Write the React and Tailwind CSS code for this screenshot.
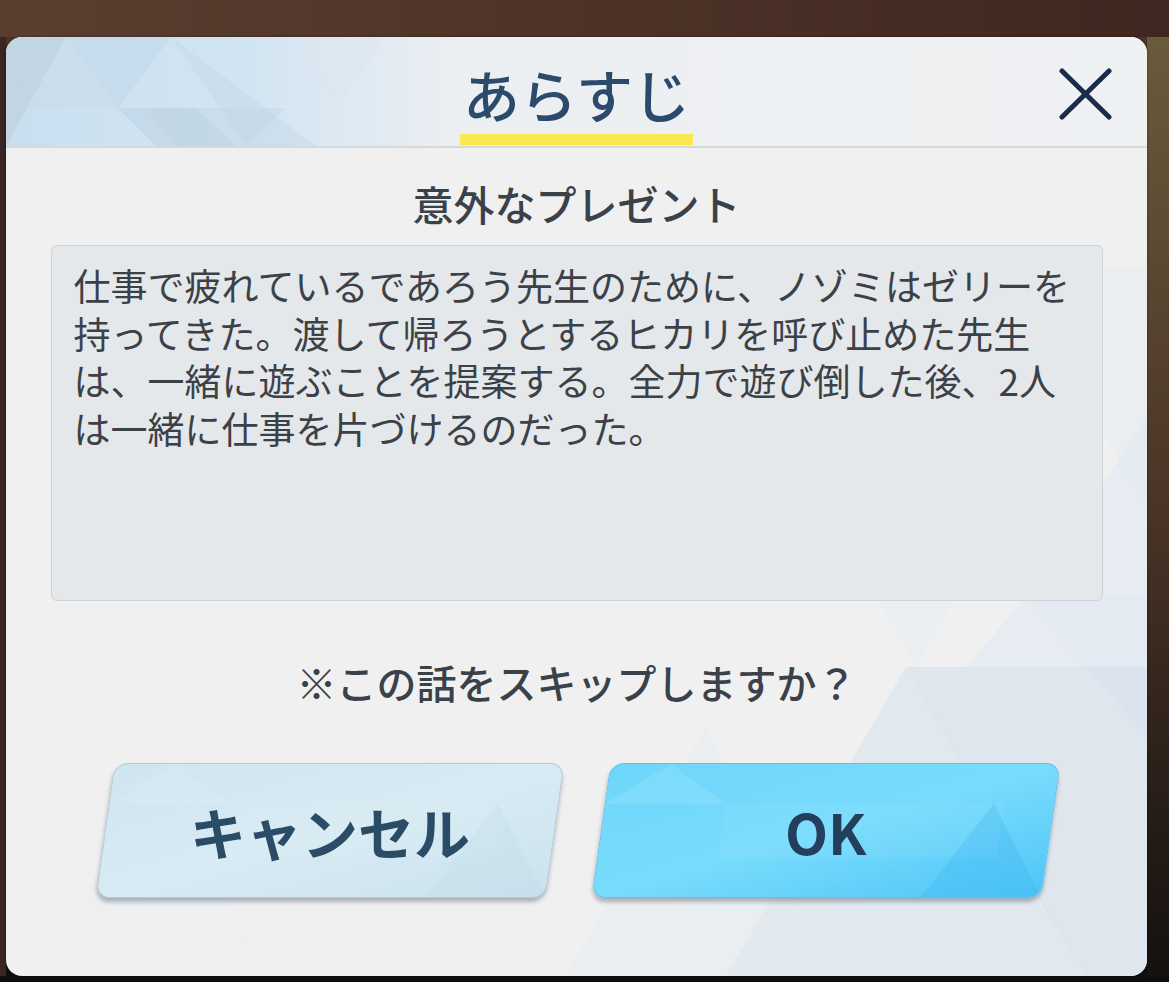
const jp = { fontFamily: '"Noto Sans CJK JP", "Noto Sans", sans-serif' };

function HeaderPattern() {
  return (
    <svg className="absolute inset-0 h-full w-full" viewBox="0 0 1141 110" preserveAspectRatio="none">
      <defs>
        <linearGradient id="hdrFade" x1="0" y1="0" x2="1" y2="0">
          <stop offset="0" stopColor="#c9dff0" />
          <stop offset="0.22" stopColor="#d3e5f2" />
          <stop offset="0.4" stopColor="#eceff2" />
          <stop offset="1" stopColor="#eff1f3" />
        </linearGradient>
      </defs>
      <rect width="1141" height="110" fill="url(#hdrFade)" />
      <polygon points="0,0 60,0 0,110" fill="#b9ccd9" opacity="0.55" />
      <polygon points="60,0 165,0 112,72" fill="#c2d8ea" opacity="0.6" />
      <polygon points="0,72 112,72 60,0" fill="#c8d9e6" opacity="0.35" />
      <polygon points="112,72 150,110 230,110 190,72" fill="#b9cfe1" opacity="0.45" />
      <polygon points="165,0 240,110 310,110" fill="#c4d6e4" opacity="0.45" />
      <polygon points="140,72 280,72 240,110 170,110" fill="#bcd0e0" opacity="0.35" />
      <polygon points="290,0 380,0 330,72" fill="#dde6ee" opacity="0.5" />
    </svg>
  );
}

function BodyPattern() {
  return (
    <svg className="absolute inset-0 h-full w-full" viewBox="0 0 1141 939" preserveAspectRatio="none">
      <polygon points="1141,560 1141,700 1020,560" fill="#dbe6f0" opacity="0.5" />
      <polygon points="720,939 900,630 1080,939" fill="#d7e4ef" opacity="0.6" />
      <polygon points="900,630 1141,630 1141,939 1080,939 1020,840" fill="#d3e0ec" opacity="0.6" />
      <polygon points="1020,560 1141,380 1141,630 960,630" fill="#e0eaf2" opacity="0.55" />
      <polygon points="560,939 700,690 820,939" fill="#e3ebf2" opacity="0.5" />
      <polygon points="820,470 1000,470 910,630" fill="#e6edf3" opacity="0.45" />
      <polygon points="30,939 160,720 260,939" fill="#e8eef3" opacity="0.4" />
      <polygon points="1000,230 1141,230 1141,470" fill="#e3ebf2" opacity="0.45" />
    </svg>
  );
}

function SlantButton({ label, primary }) {
  return (
    <button
      className={`relative flex h-[135px] w-[450px] -skew-x-[8deg] items-center justify-center overflow-hidden rounded-[14px] border shadow-[0_4px_4px_rgba(40,60,80,0.35)] ${
        primary
          ? "border-[#5fc3e8] bg-gradient-to-br from-[#6fd6fb] via-[#78dcfc] to-[#4ec5f8]"
          : "border-[#b5c9d4] bg-gradient-to-br from-[#cfe5f0] via-[#d7ebf4] to-[#cbe2ee]"
      }`}
    >
      <svg className="absolute inset-0 h-full w-full" viewBox="0 0 450 135" preserveAspectRatio="none">
        <polygon points="0,40 60,0 120,40" fill="#ffffff" opacity="0.1" />
        <polygon points="330,135 390,40 450,135" fill={primary ? "#3fb8f0" : "#c2dce9"} opacity="0.35" />
        <polygon points="120,40 400,40 400,95 120,95" fill="#ffffff" opacity="0.05" />
      </svg>
      <span
        className={`relative skew-x-[8deg] text-[56px] font-bold leading-none ${
          primary ? "text-[#243f5c]" : "text-[#2a4c66]"
        }`}
        style={jp}
      >
        {label}
      </span>
    </button>
  );
}

export default function App() {
  return (
    <div
      className="relative h-[982px] w-[1169px] overflow-hidden bg-gradient-to-b from-[#4f3528] via-[#3a2420] to-[#0f0d10]"
      style={jp}
    >
      <div className="flex h-[37px] w-full bg-gradient-to-r from-[#5a3f30] via-[#4d3327] to-[#3f2620]" />
      <div className="flex">
        <div className="w-[6px] bg-[#3a2520]" />
        <div className="relative flex h-[939px] w-[1141px] flex-col overflow-hidden rounded-[16px] bg-[#f0f0f1] shadow-[0_0_3px_rgba(0,0,0,0.4)]">
          <BodyPattern />

          <div className="relative h-[111px] shrink-0 border-b-2 border-[#d5d9dc]">
            <HeaderPattern />
            <div className="relative flex justify-center pt-[28px]">
              <div className="flex flex-col items-center">
                <span className="text-[57px] font-medium leading-[56px] text-[#2b4a6c]">
                  あらすじ
                </span>
                <div className="mt-[13px] h-[11px] w-[233px] bg-[#fbe74f]" />
              </div>
            </div>
            <button className="absolute right-[33px] top-[31px] flex h-[52px] w-[56px] items-center justify-center text-[#1b2b4c]">
              <svg width="56" height="52" viewBox="0 0 56 52" fill="none" stroke="currentColor" strokeWidth="5" strokeLinecap="round">
                <line x1="4" y1="3" x2="51" y2="49" />
                <line x1="51" y1="3" x2="4" y2="49" />
              </svg>
            </button>
          </div>

          <div className="relative flex flex-col items-center">
            <h2 className="mt-[30px] text-[41px] font-medium leading-[50px] text-[#3a4149]">
              意外なプレゼント
            </h2>

            <div className="mt-[17px] h-[356px] w-[1052px] rounded-[6px] border border-[#cdd3d8] bg-[#e4e8eb] pl-[22px] pt-[16px] text-[37px] leading-[47.5px] text-[#3c4148]">
              仕事で疲れているであろう先生のために、ノゾミはゼリーを
              <br />
              持ってきた。渡して帰ろうとするヒカリを呼び止めた先生
              <br />
              は、一緒に遊ぶことを提案する。全力で遊び倒した後、2人
              <br />
              は一緒に仕事を片づけるのだった。
            </div>

            <p className="mt-[56px] text-[40px] font-medium leading-[50px] text-[#3a4149]">
              ※この話をスキップしますか？
            </p>

            <div className="mt-[56px] flex gap-[46px] pl-[2px]">
              <SlantButton label="キャンセル" />
              <SlantButton label="OK" primary />
            </div>
          </div>
        </div>
        <div className="flex-1 bg-gradient-to-b from-[#6a5b3c] via-[#4a3426] to-[#15110f]" />
      </div>
    </div>
  );
}
